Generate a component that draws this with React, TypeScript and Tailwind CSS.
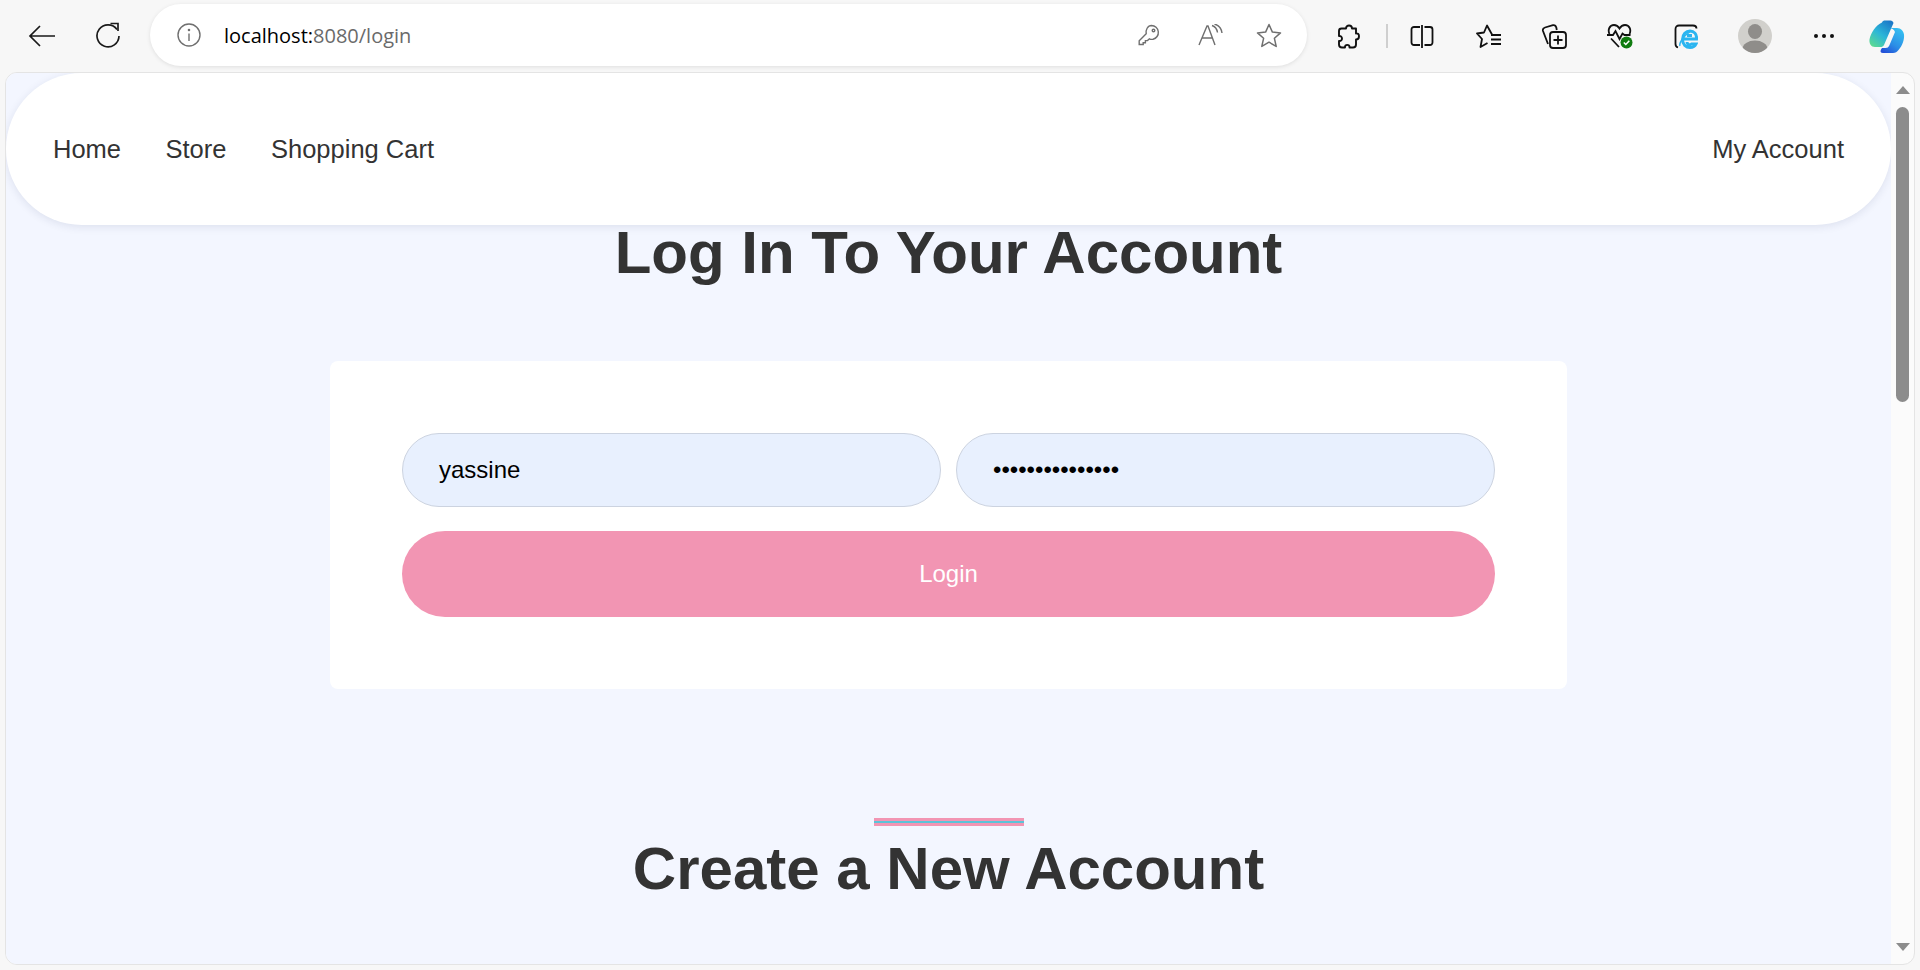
import React from 'react';

const ToolbarSlot: React.FC<{ width: string; children: React.ReactNode }> = ({ width, children }) => (
  <div className={`${width} flex shrink-0 items-center justify-center`}>{children}</div>
);

const App: React.FC = () => {
  return (
    <div className="h-[970px] w-[1920px] overflow-hidden bg-[#f7f7f7] font-['Liberation_Sans',Arial,sans-serif]">
      {/* Browser toolbar */}
      <div className="flex h-[72px] items-center">
        <ToolbarSlot width="w-[84px]">
          <svg width="28" height="24" viewBox="0 0 28 24" fill="none" stroke="#1a1a1a" strokeWidth="1.7">
            <path d="M27 12H2M12 2 2 12l10 10" />
          </svg>
        </ToolbarSlot>
        <ToolbarSlot width="w-[48px]">
          <svg width="26" height="28" viewBox="0 0 26 28" fill="none" stroke="#1a1a1a" strokeWidth="1.7">
            <path d="M22 7.5A11 11 0 1 0 24 14" />
            <path d="M15.5 1.5h7.5V9" />
          </svg>
        </ToolbarSlot>
        <div className="mt-[-2px] ml-[18px] flex h-[62px] w-[1157px] shrink-0 items-center rounded-[31px] bg-white shadow-[0_1px_4px_rgba(0,0,0,0.1)]">
          <svg className="ml-[27px]" width="24" height="24" viewBox="0 0 24 24" fill="none" stroke="#6f6f6f" strokeWidth="1.4">
            <circle cx="12" cy="12" r="11" />
            <path d="M12 10.5V18" />
            <circle cx="12" cy="7" r="0.6" fill="#6f6f6f" />
          </svg>
          <div className="ml-[23px] pt-[2px] text-[20px] font-['Open_Sans',sans-serif] text-[#6a6a6a]">
            <span className="text-black">localhost:</span>8080/login
          </div>
          <div className="ml-auto flex items-center pr-[25px]">
            <svg className="mr-[38px]" width="22" height="22" viewBox="0 0 22 22" fill="none" stroke="#6f6f6f" strokeWidth="1.4">
              <path d="M13.5 1.5a7 7 0 0 1 1.5 13.8c-1.5.3-2.6 0-3.6-.5L9.5 16.6H7.4v2.2H5.2v1.7H1.2v-3.7l7-7c-.8-3.700 1.500-8.300 5.300-8.300Z" />
              <circle cx="15.500" cy="6.500" r="1.300" />
            </svg>
            <svg className="mr-[33px]" width="25" height="22" viewBox="0 0 25 22" fill="none" stroke="#6f6f6f" strokeWidth="1.4">
              <path d="M1 21 9 2h1l7 19M4 14h11" />
              <path d="M14 1.500c3 1 5 3.500 5.500 7M16.500 0c4 1.200 7 4.500 7.500 9" />
            </svg>
            <svg width="26" height="25" viewBox="0 0 26 25" fill="none" stroke="#6f6f6f" strokeWidth="1.500" strokeLinejoin="round">
              <path d="m13 1.500 3.400 7.600 8.100.800-6.100 5.400 1.800 8.100-7.200-4.200-7.200 4.200 1.800-8.100-6.100-5.400 8.100-.800Z" />
            </svg>
          </div>
        </div>

        <ToolbarSlot width="w-[79px]">
          <svg className="ml-[5px]" width="24" height="25" viewBox="0 0 24 25" fill="none" stroke="#111" strokeWidth="1.900" strokeLinejoin="round">
            <path d="M9 4.500c0-4 6-4 6 0h4v5c4-1 4 6 0 6v5c0 2-1 3-3 3h-3.500c.5-3.500-5-3.500-4.500 0H5c-2 0-3-1-3-3v-3.500c4 .5 4-5.500 0-5V7c0-1.500 1-2.500 2.500-2.500Z" />
          </svg>
        </ToolbarSlot>
        <div className="h-[24px] w-[2px] shrink-0 bg-[#cfcfcf]" />
        <ToolbarSlot width="w-[68px]">
          <svg width="24" height="24" viewBox="0 0 24 24" fill="none" stroke="#111" strokeWidth="1.800">
            <path d="M10 3H4a2.500 2.500 0 0 0-2.500 2.500v13A2.500 2.500 0 0 0 4 21h6M12 1v23M14.500 3H20a2.500 2.500 0 0 1 2.500 2.500v13A2.500 2.500 0 0 1 20 21h-5.500" />
          </svg>
        </ToolbarSlot>
        <ToolbarSlot width="w-[66px]">
          <svg width="26" height="25" viewBox="0 0 26 25" fill="none" stroke="#111" strokeWidth="1.800" strokeLinejoin="round">
            <path d="M16 10.500 11 1.500 8 8.500l-7 1 5 5.500-1.500 8 7-4" />
            <path d="M15 11h10M15 15.500h10M15 20h10" />
          </svg>
        </ToolbarSlot>
        <ToolbarSlot width="w-[64px]">
          <svg width="26" height="25" viewBox="0 0 26 25" fill="none" stroke="#111" strokeWidth="1.800" strokeLinejoin="round">
            <path d="M7 20 2 7c-.500-1.800.300-3 2-3.500l8-2.300c1.700-.300 2.800.500 3.300 2.300l.500 2.500" />
            <rect x="9" y="8" width="16" height="16" rx="3" />
            <path d="M17 11.500v9M12.500 16h9" />
          </svg>
        </ToolbarSlot>
        <ToolbarSlot width="w-[68px]">
          <svg width="26" height="26" viewBox="0 0 26 26" fill="none">
            <path d="M2.500 11C.5 7 2.500 2 7 2c2.500 0 4.300 1.500 5.500 3.500C13.700 3.500 15.500 2 18 2c4.500 0 6.500 5 4.500 9" stroke="#111" strokeWidth="1.800" />
            <path d="M0 12h6l2.500-4 4 8 3-5.500 2 1.500h6" stroke="#111" strokeWidth="1.800" />
            <path d="m4 15.500 8 8.500" stroke="#111" strokeWidth="1.800" />
            <circle cx="19.500" cy="19.500" r="6" fill="#107c10" />
            <path d="m16.800 19.500 2 2 3.500-3.800" stroke="#fff" strokeWidth="1.500" />
          </svg>
        </ToolbarSlot>
        <ToolbarSlot width="w-[64px]">
          <svg width="24" height="25" viewBox="0 0 24 25" fill="none">
            <path d="M4 23.500C2.500 23 1.500 22 1.500 20V5C1.500 2.500 3 1.500 5 1.500h14c2 0 3.500 1 3.500 3" stroke="#111" strokeWidth="1.800" />
            <path d="M8 15h14.500c.5-5-2.500-8-6.500-8s-7.500 3.500-7.500 8.500 3.500 8 7.500 8c3 0 5-1.200 6-3.500h-4.500c-1.800 1.600-4.300.600-4.500-2" stroke="#2bb5f0" strokeWidth="3" />
            <path d="M13 11.500h5" stroke="#2bb5f0" strokeWidth="3" />
            <path d="M6 22c-1-2 2-9 11-15" stroke="#2bb5f0" strokeWidth="1.500" />
          </svg>
        </ToolbarSlot>
        <ToolbarSlot width="w-[74px]">
          <svg width="34" height="34" viewBox="0 0 34 34">
            <defs>
              <clipPath id="avatar-clip">
                <circle cx="17" cy="17" r="17" />
              </clipPath>
            </defs>
            <circle cx="17" cy="17" r="17" fill="#d1d0cc" />
            <g clipPath="url(#avatar-clip)" fill="#8f8d8a">
              <ellipse cx="17" cy="12.500" rx="7" ry="7.500" />
              <ellipse cx="17" cy="30" rx="12.500" ry="8.500" />
            </g>
          </svg>
        </ToolbarSlot>
        <ToolbarSlot width="w-[64px]">
          <svg width="20" height="4" viewBox="0 0 20 4" fill="#111">
            <circle cx="2" cy="2" r="2" />
            <circle cx="10" cy="2" r="2" />
            <circle cx="18" cy="2" r="2" />
          </svg>
        </ToolbarSlot>
        <ToolbarSlot width="w-[62px]">
          <svg width="36" height="33" viewBox="0 0 36 33">
            <defs>
              <linearGradient id="copilot-left" x1="0.800" y1="0" x2="0.100" y2="1">
                <stop offset="0" stopColor="#1b78c8" />
                <stop offset="0.500" stopColor="#2cb6d8" />
                <stop offset="1" stopColor="#5fdc8e" />
              </linearGradient>
              <linearGradient id="copilot-right" x1="0.800" y1="0" x2="0.200" y2="1">
                <stop offset="0" stopColor="#35c1f1" />
                <stop offset="0.600" stopColor="#2b8ee6" />
                <stop offset="1" stopColor="#2350d8" />
              </linearGradient>
            </defs>
            <path d="M13 2.500c.5-1.500 1.700-2 3-2h5.500c1.500 0 2.500 1 3 2.500L15 25c-.8 1.500-2 2-3.500 2H6c-4 0-6-3.500-5.500-7.500C1.500 13 7 5 13 2.500Z" fill="url(#copilot-left)" />
            <path d="M19 8h9c4 0 6.500 3 7 6.500.5 5-1.500 11-5.500 15.500-1.500 2-3 3-5.500 3H14c-2.500 0-3-1.500-2-3.500l1-1.500h3.500c2 0 3-.8 3.800-2.500L26 12c-1-2.500-3-4-7-4Z" fill="url(#copilot-right)" />
          </svg>
        </ToolbarSlot>
      </div>

      {/* Page viewport */}
      <div className="ml-[5px] flex h-[893px] w-[1910px] overflow-hidden rounded-[12px] border border-[#e4e4e4] bg-[#fbfbfb]">
        <main className="h-full w-[1885px] shrink-0 overflow-hidden bg-[#f3f6ff]">
          <nav className="flex h-[152px] items-center justify-between rounded-[76px] bg-white px-[47px] text-[25.5px] text-[#333] shadow-[0_2px_8px_rgba(30,40,90,0.1)]">
            <div className="flex gap-[44.5px]">
              <a>Home</a>
              <a>Store</a>
              <a>Shopping Cart</a>
            </div>
            <a>My Account</a>
          </nav>

          <h1 className="mt-[-7px] text-center text-[60px] font-bold leading-[69px] text-[#333]">Log In To Your Account</h1>

          <div className="mx-auto mt-[74px] h-[328px] w-[1237px] rounded-[8px] bg-white px-[72px] pt-[72px]">
            <div className="flex justify-between">
              <div className="flex h-[74px] w-[539px] items-center rounded-[37px] border border-[#ccd3e0] bg-[#e8f0fe] px-[36px] text-[24px] text-black">
                yassine
              </div>
              <div className="flex h-[74px] w-[539px] items-center rounded-[37px] border border-[#ccd3e0] bg-[#e8f0fe] px-[36px] text-[24px] text-black">
                •••••••••••••••
              </div>
            </div>
            <button className="mt-[24px] h-[86px] w-full rounded-[43px] bg-[#f295b3] text-center text-[24px] text-white">Login</button>
          </div>

          <div className="mx-auto mt-[129px] flex h-[8px] w-[150px] items-center bg-[#f295b3]">
            <div className="h-[2px] w-full bg-[#5bc3d8]" />
          </div>
          <h2 className="mt-[8px] text-center text-[60px] font-bold leading-[69px] text-[#333]">Create a New Account</h2>
        </main>

        {/* Scrollbar */}
        <div className="flex flex-1 flex-col items-center">
          <div className="mt-[13px] h-0 w-0 border-x-[7px] border-b-[8px] border-x-transparent border-b-[#8c8c8c]" />
          <div className="mt-[13px] h-[295px] w-[13px] rounded-[7px] bg-[#8c8c8c]" />
          <div className="mt-auto mb-[13px] h-0 w-0 border-x-[7px] border-t-[8px] border-x-transparent border-t-[#8c8c8c]" />
        </div>
      </div>
    </div>
  );
};

export default App;
